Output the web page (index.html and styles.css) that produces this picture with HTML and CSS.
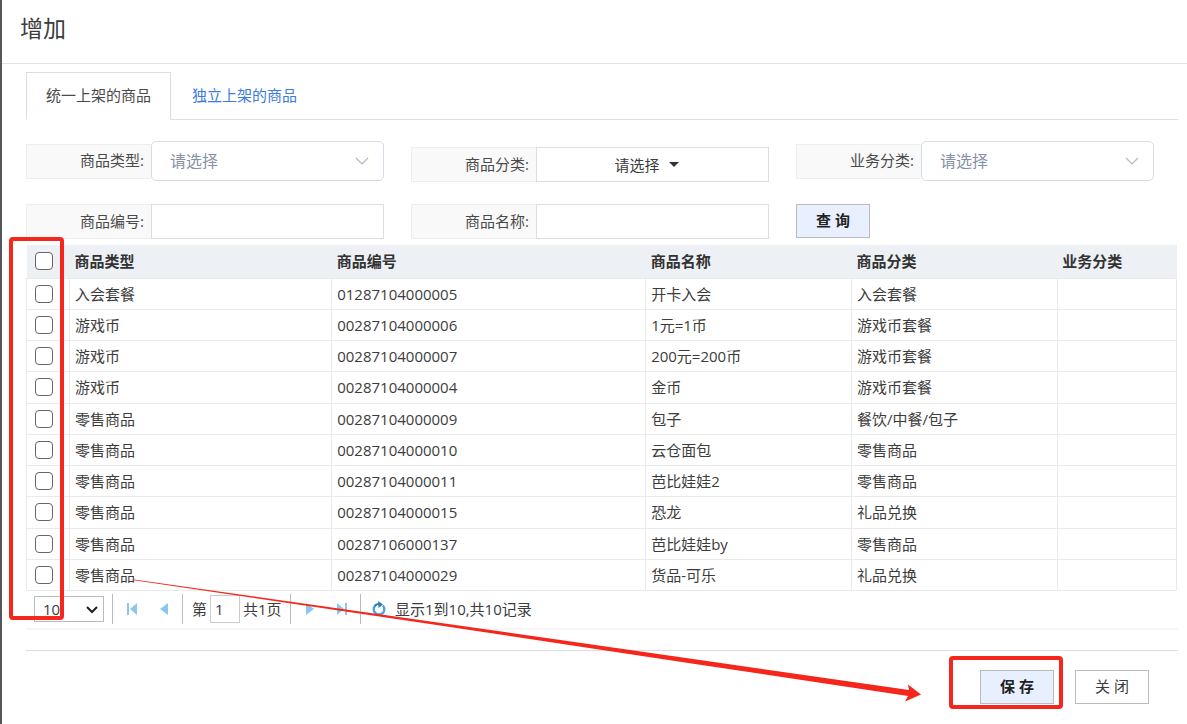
FILE: index.html
```html
<!DOCTYPE html>
<html lang="zh-CN">
<head>
<meta charset="utf-8">
<title>增加</title>
<link rel="stylesheet" href="styles.css">
</head>
<body>
<main class="dialog">
  <header class="dialog-header"><h1>增加</h1></header>

  <div class="dialog-body">
    <nav class="tabs">
      <a class="tab tab-active" href="#unified">统一上架的商品</a>
      <a class="tab" href="#separate">独立上架的商品</a>
    </nav>

    <form class="filters">
      <div class="field field-large">
        <label for="type">商品类型:</label>
        <div class="select-wrap">
          <select id="type"><option>请选择</option></select>
          <svg class="chevron" width="14" height="8" viewBox="0 0 14 8"><path d="M1 1l6 6 6-6" fill="none" stroke="#b4b8c0" stroke-width="1.2"/></svg>
        </div>
      </div>
      <div class="field field-low">
        <label for="category">商品分类:</label>
        <button id="category" class="dropdown" type="button" aria-haspopup="listbox">请选择<svg width="10" height="5" viewBox="0 0 10 5"><path d="M0 0h10L5 5z" fill="#333"/></svg></button>
      </div>
      <div class="field field-large">
        <label for="business">业务分类:</label>
        <div class="select-wrap">
          <select id="business"><option>请选择</option></select>
          <svg class="chevron" width="14" height="8" viewBox="0 0 14 8"><path d="M1 1l6 6 6-6" fill="none" stroke="#b4b8c0" stroke-width="1.2"/></svg>
        </div>
      </div>
      <div class="field">
        <label for="code">商品编号:</label>
        <input id="code" type="text">
      </div>
      <div class="field">
        <label for="name">商品名称:</label>
        <input id="name" type="text">
      </div>
      <div class="actions"><button class="btn btn-primary" type="button">查 询</button></div>
    </form>

    <section class="grid">
      <table>
        <colgroup><col class="c-check"><col class="c-type"><col class="c-code"><col class="c-name"><col class="c-cat"><col></colgroup>
        <thead>
          <tr><th><input type="checkbox" aria-label="全选"></th><th>商品类型</th><th>商品编号</th><th>商品名称</th><th>商品分类</th><th>业务分类</th></tr>
        </thead>
        <tbody>
          <tr><td><input type="checkbox" aria-label="开卡入会"></td><td>入会套餐</td><td>01287104000005</td><td>开卡入会</td><td>入会套餐</td><td></td></tr>
          <tr><td><input type="checkbox" aria-label="1元=1币"></td><td>游戏币</td><td>00287104000006</td><td>1元=1币</td><td>游戏币套餐</td><td></td></tr>
          <tr><td><input type="checkbox" aria-label="200元=200币"></td><td>游戏币</td><td>00287104000007</td><td>200元=200币</td><td>游戏币套餐</td><td></td></tr>
          <tr><td><input type="checkbox" aria-label="金币"></td><td>游戏币</td><td>00287104000004</td><td>金币</td><td>游戏币套餐</td><td></td></tr>
          <tr><td><input type="checkbox" aria-label="包子"></td><td>零售商品</td><td>00287104000009</td><td>包子</td><td>餐饮/中餐/包子</td><td></td></tr>
          <tr><td><input type="checkbox" aria-label="云仓面包"></td><td>零售商品</td><td>00287104000010</td><td>云仓面包</td><td>零售商品</td><td></td></tr>
          <tr><td><input type="checkbox" aria-label="芭比娃娃2"></td><td>零售商品</td><td>00287104000011</td><td>芭比娃娃2</td><td>零售商品</td><td></td></tr>
          <tr><td><input type="checkbox" aria-label="恐龙"></td><td>零售商品</td><td>00287104000015</td><td>恐龙</td><td>礼品兑换</td><td></td></tr>
          <tr><td><input type="checkbox" aria-label="芭比娃娃by"></td><td>零售商品</td><td>00287106000137</td><td>芭比娃娃by</td><td>零售商品</td><td></td></tr>
          <tr><td><input type="checkbox" aria-label="货品-可乐"></td><td>零售商品</td><td>00287104000029</td><td>货品-可乐</td><td>礼品兑换</td><td></td></tr>
        </tbody>
      </table>

      <div class="pager">
        <div class="page-size">
          <select aria-label="每页记录数"><option>10</option></select>
          <svg class="size-arrow" width="12" height="8" viewBox="0 0 12 8"><path d="M1 1l5 5 5-5" fill="none" stroke="#222" stroke-width="2"/></svg>
        </div>
        <div class="pager-group pager-nav">
          <button type="button" aria-label="首页"><svg width="16" height="16" viewBox="0 0 16 16"><path d="M3 2h2v12H3zM13 2v12L6 8z" fill="#8ac7ee"/></svg></button>
          <button type="button" aria-label="上一页"><svg width="16" height="16" viewBox="0 0 16 16"><path d="M12 2v12L4 8z" fill="#8ac7ee"/></svg></button>
        </div>
        <div class="pager-group pager-page">
          <label for="page">第</label><input id="page" type="text" value="1"><span>共1页</span>
        </div>
        <div class="pager-group pager-nav">
          <button type="button" aria-label="下一页"><svg width="16" height="16" viewBox="0 0 16 16"><path d="M4 2v12l8-6z" fill="#8ac7ee"/></svg></button>
          <button type="button" aria-label="末页"><svg width="16" height="16" viewBox="0 0 16 16"><path d="M11 2h2v12h-2zM3 2v12l7-6z" fill="#8ac7ee"/></svg></button>
        </div>
        <div class="pager-group pager-info">
          <button type="button" aria-label="刷新"><svg width="16" height="16" viewBox="0 0 16 16"><path d="M4.500 4.300A5.300 5.300 0 1 0 11.800 4.500" fill="none" stroke="#4ba3dc" stroke-width="2.400"/><path d="M4 4.800A5 5 0 0 1 8 3" fill="none" stroke="#2c7db8" stroke-width="2.200"/><path d="M7 0l5 3.500L7.500 7z" fill="#2c7db8"/></svg></button>
          <span>显示1到10,共10记录</span>
        </div>
      </div>
    </section>

    <footer class="dialog-footer">
      <button class="btn btn-primary" type="button">保 存</button>
      <button class="btn" type="button">关 闭</button>
    </footer>
  </div>

  <svg class="marks" width="1187" height="724" viewBox="0 0 1187 724" aria-hidden="true">
    <rect x="11" y="239" width="51" height="379" rx="2" fill="none" stroke="#f5261b" stroke-width="4"/>
    <rect x="951" y="658" width="110" height="49" rx="2" fill="none" stroke="#f5261b" stroke-width="4"/>
    <path d="M134 579.500L420 620L700 660L909 690L908 684.500L921 694.500L905 701.500L908 696L700 664.700L420 622.500L134 580.200Z" fill="#f5261b"/>
  </svg>
</main>
</body>
</html>
```

FILE: styles.css
```css
* { box-sizing: border-box; }
body {
  margin: 0;
  background: #fff;
  color: #3c3c3c;
  font: 15px/20px "Open Sans", "Noto Sans CJK SC", sans-serif;
}
button, input, select { font: inherit; color: inherit; margin: 0; }
a { color: inherit; text-decoration: none; }

.dialog {
  position: relative;
  min-height: 100vh;
  border-left: 2px solid #55555a;
  overflow: hidden;
}
.dialog-header {
  height: 64px;
  padding: 13px 18px;
  border-bottom: 1px solid #e2e2e2;
}
.dialog-header h1 { margin: 0; font-size: 23px; line-height: 30px; font-weight: 400; }
.dialog-body { padding: 8px 9px 16px 24px; }

.tabs { display: flex; height: 48px; border-bottom: 1px solid #ddd; }
.tab {
  height: 48px;
  padding: 0 20px;
  border: 1px solid transparent;
  line-height: 44px;
  color: #3d7be0;
}
.tab-active {
  padding: 0 19px;
  border-color: #ddd;
  border-bottom-color: #fff;
  background: #fff;
  color: #4a4a4a;
}

.filters {
  display: grid;
  grid-template-columns: repeat(3, 1fr);
  gap: 22px 27px;
  padding: 21px 24px 6px 0;
}
.field { display: flex; align-items: center; height: 35px; }
.field-large { height: 40px; }
.field-low { align-self: end; margin-top: 6px; }
.field label {
  width: 125px;
  height: 35px;
  padding-right: 7px;
  border: 1px solid #eee;
  border-right: 0;
  background: #f9f9f9;
  color: #4a4a4a;
  line-height: 33px;
  text-align: right;
}
.field-large label { line-height: 30px; }
.field > input, .dropdown {
  flex: 1;
  min-width: 0;
  height: 35px;
  border: 1px solid #ddd;
  background: #fff;
}
.field > input { padding: 0 8px; }
.dropdown { display: flex; align-items: center; justify-content: center; gap: 9px; padding: 0 24px 0 12px; }
.select-wrap { position: relative; flex: 1; }
.select-wrap select {
  display: block;
  width: 100%;
  height: 40px;
  padding: 0 18px;
  border: 1px solid #d8dce5;
  border-radius: 5px;
  appearance: none;
  background: #fff;
  color: #8591a5;
  font-size: 16px;
}
.chevron { position: absolute; right: 15px; top: 16px; pointer-events: none; }

.btn {
  width: 74px;
  height: 34px;
  padding: 0 0 2px;
  border: 1px solid #bbb;
  background: #fff;
}
.btn-primary { background: #e8f0ff; color: #222; font-weight: 700; }

.grid { border-bottom: 2px solid #f6f6f6; }
.grid table { width: calc(100% - 1px); table-layout: fixed; border-collapse: collapse; }
.c-check { width: 43px; }
.c-type { width: 22.8%; }
.c-code { width: 27.3%; }
.c-name, .c-cat { width: 17.9%; }
th, td { padding: 0 5px; text-align: left; white-space: nowrap; }
th { height: 33px; background: #edf0f5; color: #333; font-weight: 700; }
td { height: 31px; border: 1px solid #eaeaea; }
tbody tr:nth-child(4n) td { height: 32px; }
th:first-child, td:first-child { padding: 0 8px; }
input[type="checkbox"] {
  display: block;
  width: 18px;
  height: 18px;
  border: 1px solid #666;
  border-radius: 4px;
  appearance: none;
  background: #fff;
}

.pager { display: flex; align-items: center; height: 37px; padding-left: 8px; }
.page-size { position: relative; margin-right: 8px; }
.page-size select {
  display: block;
  width: 70px;
  height: 26px;
  padding: 0 8px;
  border: 1px solid #bbb;
  appearance: none;
  background: #fff;
}
.size-arrow { position: absolute; right: 6px; top: 10px; pointer-events: none; }
.pager-group { display: flex; align-items: center; height: 30px; border-left: 1px solid #bbb; }
.pager-group button { width: 16px; height: 16px; padding: 0; border: 0; background: none; }
.pager-group svg { display: block; }
.pager-nav { width: 70px; padding-left: 11px; gap: 16px; }
.pager-page { width: 108px; padding-left: 9px; gap: 3px; }
.pager-page input { width: 30px; height: 28px; padding: 0 4px; border: 1px solid #ccc; }
.pager-info { padding-left: 10px; gap: 8px; }

.dialog-footer {
  display: flex;
  justify-content: flex-end;
  gap: 21px;
  margin-top: 20px;
  padding: 19px 29px 0 0;
  border-top: 1px solid #ddd;
}
.marks { position: absolute; left: -2px; top: 0; pointer-events: none; }
```
